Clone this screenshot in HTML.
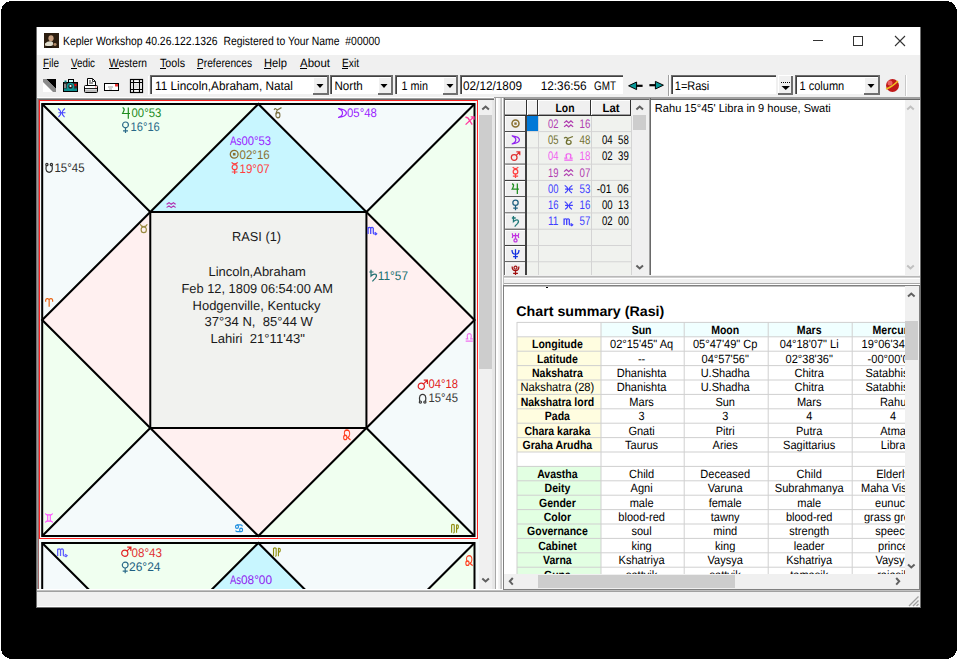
<!DOCTYPE html><html><head><meta charset="utf-8"><style>html,body{margin:0;padding:0;background:#fff;overflow:hidden}svg{display:block}text{font-family:"Liberation Sans", sans-serif}</style></head><body>
<svg width="957" height="660" viewBox="0 0 957 660" shape-rendering="crispEdges" text-rendering="geometricPrecision">
<rect x="1" y="1" width="956" height="658" rx="11" ry="11" fill="#000" shape-rendering="crispEdges"/>
<rect x="36" y="27" width="885" height="581" fill="#6e6e6e"/>
<rect x="37" y="27" width="883" height="580" fill="#f0f0f0"/>
<rect x="37" y="27" width="883" height="28" fill="#ffffff"/>
<g shape-rendering="geometricPrecision">
<rect x="44" y="33" width="15" height="15" fill="#2c1e10"/>
<ellipse cx="51" cy="38.2" rx="2.6" ry="3" fill="#c8a080"/>
<path d="M45 43.5 Q48 40.5 52 41.5 Q54 42.5 52.5 45.5 Q49 46.5 45 45.5Z" fill="#e0dccc"/>
<path d="M46 46 H52 V48 H46Z" fill="#1a120a"/>
<ellipse cx="55" cy="44.5" rx="1.6" ry="1.4" fill="#b08a68"/>
</g>
<text x="63" y="45" font-size="12" fill="#000" textLength="317" lengthAdjust="spacingAndGlyphs" xml:space="preserve">Kepler Workshop 40.26.122.1326  Registered to Your Name  #00000</text>
<rect x="813" y="40" width="10" height="1" fill="#333"/>
<rect x="853.5" y="36.5" width="9" height="9" fill="none" stroke="#333" stroke-width="1.2"/>
<path d="M895 36 L905 46 M905 36 L895 46" stroke="#333" stroke-width="1.1" shape-rendering="geometricPrecision"/>
<text x="43" y="67" font-size="12" fill="#000" textLength="16" lengthAdjust="spacingAndGlyphs" xml:space="preserve">File</text>
<rect x="43" y="68" width="6" height="1" fill="#000"/>
<text x="71" y="67" font-size="12" fill="#000" textLength="24" lengthAdjust="spacingAndGlyphs" xml:space="preserve">Vedic</text>
<rect x="71" y="68" width="6" height="1" fill="#000"/>
<text x="109" y="67" font-size="12" fill="#000" textLength="38" lengthAdjust="spacingAndGlyphs" xml:space="preserve">Western</text>
<rect x="109" y="68" width="10" height="1" fill="#000"/>
<text x="160" y="67" font-size="12" fill="#000" textLength="25" lengthAdjust="spacingAndGlyphs" xml:space="preserve">Tools</text>
<rect x="160" y="68" width="6" height="1" fill="#000"/>
<text x="197" y="67" font-size="12" fill="#000" textLength="55" lengthAdjust="spacingAndGlyphs" xml:space="preserve">Preferences</text>
<rect x="197" y="68" width="6" height="1" fill="#000"/>
<text x="264" y="67" font-size="12" fill="#000" textLength="23" lengthAdjust="spacingAndGlyphs" xml:space="preserve">Help</text>
<rect x="264" y="68" width="7" height="1" fill="#000"/>
<text x="300" y="67" font-size="12" fill="#000" textLength="30" lengthAdjust="spacingAndGlyphs" xml:space="preserve">About</text>
<rect x="300" y="68" width="7" height="1" fill="#000"/>
<text x="342" y="67" font-size="12" fill="#000" textLength="17" lengthAdjust="spacingAndGlyphs" xml:space="preserve">Exit</text>
<rect x="342" y="68" width="6" height="1" fill="#000"/>
<rect x="37" y="72" width="883" height="26" fill="#f0f0f0"/>
<rect x="37" y="97" width="883" height="1" fill="#a0a0a0"/>
<g shape-rendering="geometricPrecision">
<path d="M43 79 H56 V92 H43Z" fill="#fff"/>
<path d="M46 79 H56 V89Z" fill="#000"/>
<path d="M43 79 H46 L56 89 V92 H53 L43 82Z" fill="#8a8a8a"/>
<rect x="63.5" y="82.5" width="14" height="9" fill="#303030" stroke="#000" stroke-width="1"/>
<rect x="68.5" y="79.5" width="5" height="3" fill="#cff" stroke="#000" stroke-width="1"/>
<rect x="64" y="88.5" width="13" height="2.5" fill="#0a8a8a"/>
<rect x="64" y="84" width="2" height="4" fill="#888"/>
<circle cx="70.5" cy="86.5" r="3" fill="#202020" stroke="#0a9a9a" stroke-width="1.5"/>
<circle cx="70.5" cy="86" r="1.1" fill="#fff"/>
<rect x="74.5" y="84" width="2" height="2" fill="#e00"/>
<rect x="64.5" y="80.5" width="2" height="2" fill="#0a8a8a"/>
<path d="M87.5 78.5 H92.5 L95.5 81.5 V86.5 H87.5Z" fill="#fff" stroke="#000" stroke-width="1"/>
<path d="M89 81 H91 M89 83 H93 M92.5 78.5 V81.5 H95.5" fill="none" stroke="#333" stroke-width="1"/>
<rect x="84.5" y="85.5" width="13" height="7" rx="1" fill="#fff" stroke="#000" stroke-width="1"/>
<rect x="85" y="89.5" width="12" height="2.5" fill="#bbb"/>
<rect x="85" y="88" width="12" height="1" fill="#222"/>
<rect x="95" y="86.5" width="1.5" height="1" fill="#f66"/>
<rect x="104.5" y="83.5" width="14" height="7" fill="#fff" stroke="#000" stroke-width="1"/>
<rect x="115" y="84" width="3" height="2.5" fill="#e33"/>
<path d="M108 87 H113 M109 89 H112" stroke="#888" stroke-width="0.8"/>
<rect x="130.5" y="79.5" width="12" height="13" fill="#fff" stroke="#000" stroke-width="1.2"/>
<path d="M130.5 82.5 H142.5 M130.5 89.5 H142.5 M133.5 79.5 V92.5 M139.5 79.5 V92.5" stroke="#000" stroke-width="1.2" fill="none"/>
<rect x="134.5" y="83.5" width="4" height="5" fill="#ddd"/>
</g>
<rect x="148" y="76" width="1" height="19" fill="#fff"/>
<rect x="150" y="75" width="180" height="20" fill="#a0a0a0"/>
<rect x="151" y="76" width="179" height="19" fill="#fff"/>
<rect x="150" y="75" width="180" height="1" fill="#6e6e6e"/>
<rect x="150" y="75" width="1" height="20" fill="#6e6e6e"/>
<rect x="151" y="76" width="178" height="1" fill="#404040"/>
<rect x="151" y="76" width="1" height="18" fill="#404040"/>
<rect x="150" y="94" width="180" height="1" fill="#f0f0f0"/>
<rect x="329" y="75" width="1" height="20" fill="#f0f0f0"/>
<rect x="152" y="77" width="176" height="16" fill="#fff"/>
<text x="155" y="90" font-size="12.5" fill="#000" textLength="138" lengthAdjust="spacingAndGlyphs" xml:space="preserve">11 Lincoln,Abraham, Natal</text>
<rect x="313" y="77" width="16" height="18" fill="#f0f0f0"/>
<rect x="313" y="77" width="16" height="1" fill="#fff"/>
<rect x="313" y="77" width="1" height="17" fill="#fff"/>
<rect x="313" y="93" width="16" height="2" fill="#707070"/>
<rect x="327" y="76" width="2" height="19" fill="#707070"/>
<path d="M316.5 84 H323.5 L320 88Z" fill="#000" shape-rendering="geometricPrecision"/>
<rect x="330" y="75" width="64" height="20" fill="#a0a0a0"/>
<rect x="331" y="76" width="63" height="19" fill="#fff"/>
<rect x="330" y="75" width="64" height="1" fill="#6e6e6e"/>
<rect x="330" y="75" width="1" height="20" fill="#6e6e6e"/>
<rect x="331" y="76" width="62" height="1" fill="#404040"/>
<rect x="331" y="76" width="1" height="18" fill="#404040"/>
<rect x="330" y="94" width="64" height="1" fill="#f0f0f0"/>
<rect x="393" y="75" width="1" height="20" fill="#f0f0f0"/>
<rect x="332" y="77" width="60" height="16" fill="#fff"/>
<text x="334.5" y="90" font-size="12.5" fill="#000" textLength="28.3" lengthAdjust="spacingAndGlyphs" xml:space="preserve">North</text>
<rect x="377.5" y="77" width="15.5" height="18" fill="#f0f0f0"/>
<rect x="377.5" y="77" width="15.5" height="1" fill="#fff"/>
<rect x="377.5" y="77" width="1" height="17" fill="#fff"/>
<rect x="377.5" y="93" width="15.5" height="2" fill="#707070"/>
<rect x="391" y="76" width="2" height="19" fill="#707070"/>
<path d="M380.5 84 H387.5 L384.0 88Z" fill="#000" shape-rendering="geometricPrecision"/>
<rect x="395" y="75" width="64" height="20" fill="#a0a0a0"/>
<rect x="396" y="76" width="63" height="19" fill="#fff"/>
<rect x="395" y="75" width="64" height="1" fill="#6e6e6e"/>
<rect x="395" y="75" width="1" height="20" fill="#6e6e6e"/>
<rect x="396" y="76" width="62" height="1" fill="#404040"/>
<rect x="396" y="76" width="1" height="18" fill="#404040"/>
<rect x="395" y="94" width="64" height="1" fill="#f0f0f0"/>
<rect x="458" y="75" width="1" height="20" fill="#f0f0f0"/>
<rect x="397" y="77" width="60" height="16" fill="#fff"/>
<text x="401.6" y="90" font-size="12.5" fill="#000" textLength="26.3" lengthAdjust="spacingAndGlyphs" xml:space="preserve">1 min</text>
<rect x="443" y="77" width="15" height="18" fill="#f0f0f0"/>
<rect x="443" y="77" width="15" height="1" fill="#fff"/>
<rect x="443" y="77" width="1" height="17" fill="#fff"/>
<rect x="443" y="93" width="15" height="2" fill="#707070"/>
<rect x="456" y="76" width="2" height="19" fill="#707070"/>
<path d="M446.5 84 H453.5 L450 88Z" fill="#000" shape-rendering="geometricPrecision"/>
<rect x="460" y="75" width="164" height="20" fill="#a0a0a0"/>
<rect x="461" y="76" width="163" height="19" fill="#fff"/>
<rect x="460" y="75" width="164" height="1" fill="#6e6e6e"/>
<rect x="460" y="75" width="1" height="20" fill="#6e6e6e"/>
<rect x="461" y="76" width="162" height="1" fill="#404040"/>
<rect x="461" y="76" width="1" height="18" fill="#404040"/>
<rect x="460" y="94" width="164" height="1" fill="#f0f0f0"/>
<rect x="623" y="75" width="1" height="20" fill="#f0f0f0"/>
<rect x="462" y="77" width="160" height="16" fill="#fff"/>
<text x="463" y="90" font-size="12.5" fill="#000" textLength="59" lengthAdjust="spacingAndGlyphs" xml:space="preserve">02/12/1809</text>
<text x="540.7" y="90" font-size="12.5" fill="#000" textLength="46" lengthAdjust="spacingAndGlyphs" xml:space="preserve">12:36:56</text>
<text x="594.1" y="90" font-size="12.5" fill="#000" textLength="22" lengthAdjust="spacingAndGlyphs" xml:space="preserve">GMT</text>
<path d="M636 85.8 H642.6" stroke="#000" stroke-width="2.2" shape-rendering="geometricPrecision"/>
<path d="M628.6 85.8 L636.6 82 V89.6Z" fill="#089898" stroke="#000" stroke-width="1" stroke-linejoin="round" shape-rendering="geometricPrecision"/>
<path d="M649.4 85.2 H656" stroke="#000" stroke-width="2.2" shape-rendering="geometricPrecision"/>
<path d="M663.4 85.2 L655.4 81.4 V89Z" fill="#089898" stroke="#000" stroke-width="1" stroke-linejoin="round" shape-rendering="geometricPrecision"/>
<rect x="668" y="75" width="1" height="21" fill="#a0a0a0"/>
<rect x="669" y="75" width="1" height="21" fill="#ffffff"/>
<rect x="671" y="75" width="106" height="20" fill="#a0a0a0"/>
<rect x="672" y="76" width="105" height="19" fill="#fff"/>
<rect x="671" y="75" width="106" height="1" fill="#6e6e6e"/>
<rect x="671" y="75" width="1" height="20" fill="#6e6e6e"/>
<rect x="672" y="76" width="104" height="1" fill="#404040"/>
<rect x="672" y="76" width="1" height="18" fill="#404040"/>
<rect x="671" y="94" width="106" height="1" fill="#f0f0f0"/>
<rect x="776" y="75" width="1" height="20" fill="#f0f0f0"/>
<rect x="673" y="77" width="102" height="16" fill="#fff"/>
<text x="674.8" y="90" font-size="12.5" fill="#000" textLength="34.5" lengthAdjust="spacingAndGlyphs" xml:space="preserve">1=Rasi</text>
<rect x="778" y="75" width="15" height="20" fill="#f0f0f0"/>
<rect x="778" y="75" width="15" height="1" fill="#ffffff"/>
<rect x="778" y="75" width="1" height="20" fill="#ffffff"/>
<rect x="778" y="93" width="15" height="2" fill="#6e6e6e"/>
<rect x="791" y="76" width="2" height="19" fill="#6e6e6e"/>
<rect x="781" y="82" width="1.2" height="1.4" fill="#000"/>
<rect x="783" y="82" width="1.2" height="1.4" fill="#000"/>
<rect x="785" y="82" width="1.2" height="1.4" fill="#000"/>
<rect x="787" y="82" width="1.2" height="1.4" fill="#000"/>
<rect x="789" y="82" width="1.2" height="1.4" fill="#000"/>
<path d="M781.5 86 H790 L785.75 90Z" fill="#000" shape-rendering="geometricPrecision"/>
<rect x="795" y="75" width="86" height="20" fill="#a0a0a0"/>
<rect x="796" y="76" width="85" height="19" fill="#fff"/>
<rect x="795" y="75" width="86" height="1" fill="#6e6e6e"/>
<rect x="795" y="75" width="1" height="20" fill="#6e6e6e"/>
<rect x="796" y="76" width="84" height="1" fill="#404040"/>
<rect x="796" y="76" width="1" height="18" fill="#404040"/>
<rect x="795" y="94" width="86" height="1" fill="#f0f0f0"/>
<rect x="880" y="75" width="1" height="20" fill="#f0f0f0"/>
<rect x="797" y="77" width="82" height="16" fill="#fff"/>
<text x="799.5" y="90" font-size="12.5" fill="#000" textLength="44.7" lengthAdjust="spacingAndGlyphs" xml:space="preserve">1 column</text>
<rect x="864" y="77" width="16" height="18" fill="#f0f0f0"/>
<rect x="864" y="77" width="16" height="1" fill="#fff"/>
<rect x="864" y="77" width="1" height="17" fill="#fff"/>
<rect x="864" y="93" width="16" height="2" fill="#707070"/>
<rect x="878" y="76" width="2" height="19" fill="#707070"/>
<path d="M867.5 84 H874.5 L871 88Z" fill="#000" shape-rendering="geometricPrecision"/>
<g shape-rendering="geometricPrecision"><circle cx="892.5" cy="85.5" r="6.5" fill="#c01818"/><circle cx="890" cy="83" r="2.5" fill="#ff8080" opacity="0.7"/><path d="M886 89 Q892 87 898 81" stroke="#f0c020" stroke-width="1.6" fill="none"/></g>
<rect x="905" y="75" width="1" height="21" fill="#c8c8c8"/>
<rect x="906" y="75" width="1" height="21" fill="#fff"/>
<rect x="37" y="98" width="457" height="491" fill="#f0f0f0"/>
<rect x="37" y="97" width="457" height="1" fill="#ffffff"/>
<rect x="37" y="98" width="457" height="1" fill="#a0a0a0"/>
<rect x="38" y="99" width="456" height="1" fill="#696969"/>
<rect x="37" y="98" width="1" height="491" fill="#949c9c"/>
<rect x="38" y="99" width="1" height="490" fill="#a06868"/>
<defs><clipPath id="cp"><rect x="39" y="100" width="440" height="489"/></clipPath></defs>
<g clip-path="url(#cp)">
<rect x="39" y="100" width="440" height="489" fill="#f4fafa"/>
<g shape-rendering="geometricPrecision">
<path d="M150.275,212 L258.35,104 L366.425,212Z" fill="#c8f6ff"/>
<path d="M42.2,104 L258.35,104 L150.275,212Z" fill="#f0fff0"/>
<path d="M42.2,104 L150.275,212 L42.2,320Z" fill="#f4fafb"/>
<path d="M150.275,212 L42.2,320 L150.275,428Z" fill="#fff0f0"/>
<path d="M42.2,320 L150.275,428 L42.2,536Z" fill="#f0fff0"/>
<path d="M42.2,536 L150.275,428 L258.35,536Z" fill="#f4fafb"/>
<path d="M150.275,428 L258.35,536 L366.425,428Z" fill="#fff0f0"/>
<path d="M258.35,536 L366.425,428 L474.5,536Z" fill="#f0fff0"/>
<path d="M474.5,536 L366.425,428 L474.5,320Z" fill="#f4fafb"/>
<path d="M366.425,212 L474.5,320 L366.425,428Z" fill="#fff0f0"/>
<path d="M474.5,320 L366.425,212 L474.5,104Z" fill="#f0fff0"/>
<path d="M474.5,104 L366.425,212 L258.35,104Z" fill="#f4fafb"/>
<rect x="150.275" y="212" width="216.15" height="216" fill="#f1f2ef"/>
<path d="M42.2,104 L150.275,212 M474.5,104 L366.425,212 M42.2,536 L150.275,428 M474.5,536 L366.425,428 M258.35,104 L42.2,320 L258.35,536 L474.5,320 Z" fill="none" stroke="#000" stroke-width="2.1"/>
<rect x="150.275" y="212" width="216.15" height="216" fill="#f1f2ef" stroke="#000" stroke-width="2"/>
<rect x="42.2" y="104" width="432.3" height="432" fill="none" stroke="#000" stroke-width="2"/>
</g>
<rect x="39.5" y="100.5" width="438" height="438" fill="none" stroke="#ff2020" stroke-width="1"/>
<g shape-rendering="geometricPrecision">
<path d="M150.275,651 L258.35,543 L366.425,651Z" fill="#c8f6ff"/>
<path d="M42.2,543 L258.35,543 L150.275,651Z" fill="#f0fff0"/>
<path d="M42.2,543 L150.275,651 L42.2,759Z" fill="#f4fafb"/>
<path d="M150.275,651 L42.2,759 L150.275,867Z" fill="#fff0f0"/>
<path d="M42.2,759 L150.275,867 L42.2,975Z" fill="#f0fff0"/>
<path d="M42.2,975 L150.275,867 L258.35,975Z" fill="#f4fafb"/>
<path d="M150.275,867 L258.35,975 L366.425,867Z" fill="#fff0f0"/>
<path d="M258.35,975 L366.425,867 L474.5,975Z" fill="#f0fff0"/>
<path d="M474.5,975 L366.425,867 L474.5,759Z" fill="#f4fafb"/>
<path d="M366.425,651 L474.5,759 L366.425,867Z" fill="#fff0f0"/>
<path d="M474.5,759 L366.425,651 L474.5,543Z" fill="#f0fff0"/>
<path d="M474.5,543 L366.425,651 L258.35,543Z" fill="#f4fafb"/>
<rect x="150.275" y="651" width="216.15" height="216" fill="#f1f2ef"/>
<path d="M42.2,543 L150.275,651 M474.5,543 L366.425,651 M42.2,975 L150.275,867 M474.5,975 L366.425,867 M258.35,543 L42.2,759 L258.35,975 L474.5,759 Z" fill="none" stroke="#000" stroke-width="2.1"/>
<rect x="150.275" y="651" width="216.15" height="216" fill="#f1f2ef" stroke="#000" stroke-width="2"/>
<rect x="42.2" y="543" width="432.3" height="432" fill="none" stroke="#000" stroke-width="2"/>
</g>
<g transform="translate(57 108) scale(0.900 0.950)" shape-rendering="geometricPrecision"><path d="M1.2 0.6 Q7.4 5 1.6 9.6 M8.8 0.6 Q2.6 5 8.4 9.6 M1.6 5 H9.4" fill="none" stroke="#4848ff" stroke-width="1.30"/></g>
<g transform="translate(122.3 107.2) scale(1.000 1.000)" shape-rendering="geometricPrecision"><path d="M0.3 0.3 Q2.6 1.3 1.6 3.6 Q0.8 5.4 0.3 6.3 H7.7 M6 0.2 V11.5" fill="none" stroke="#1e8c1e" stroke-width="1.20"/></g>
<text x="131.5" y="116.6" font-size="12.5" fill="#1e8c1e" textLength="29.8" lengthAdjust="spacingAndGlyphs" xml:space="preserve">00°53</text>
<g transform="translate(122 121.6) scale(1.000 1.000)" shape-rendering="geometricPrecision"><circle cx="3.5" cy="3.3" r="2.9" fill="none" stroke="#2a6a88" stroke-width="1.20"/><path d="M3.5 6.2 V11.5 M1 9.3 H6" stroke="#2a6a88" stroke-width="1.20"/></g>
<text x="130.5" y="131.2" font-size="12.5" fill="#2a6a88" textLength="29.3" lengthAdjust="spacingAndGlyphs" xml:space="preserve">16°16</text>
<g transform="translate(45 163) scale(1.000 1.000)" shape-rendering="geometricPrecision"><path d="M1.2 2.6 Q0.6 6 1.6 8 Q4.15 10.6 6.7 8 Q7.7 6 7.1 2.6" fill="none" stroke="#303030" stroke-width="1.20"/><circle cx="1.9" cy="1.5" r="1.1" fill="none" stroke="#303030" stroke-width="1.20"/><circle cx="6.4" cy="1.5" r="1.1" fill="none" stroke="#303030" stroke-width="1.20"/></g>
<text x="54.5" y="172" font-size="12.5" fill="#303030" textLength="30.0" lengthAdjust="spacingAndGlyphs" xml:space="preserve">15°45</text>
<text x="230" y="144.7" font-size="12.5" fill="#9a22ff" textLength="11.5" lengthAdjust="spacingAndGlyphs" xml:space="preserve">As</text>
<text x="241.5" y="144.7" font-size="12.5" fill="#9a22ff" textLength="29.5" lengthAdjust="spacingAndGlyphs" xml:space="preserve">00°53</text>
<g transform="translate(229.4 149.4) scale(1.000 1.000)" shape-rendering="geometricPrecision"><circle cx="4.8" cy="4.8" r="3.9" fill="none" stroke="#8a7030" stroke-width="1.30"/><rect x="3.5" y="3.5" width="2.6" height="2.6" fill="#8a7030"/></g>
<text x="239.5" y="159" font-size="12.5" fill="#8a7030" textLength="30.3" lengthAdjust="spacingAndGlyphs" xml:space="preserve">02°16</text>
<g transform="translate(231 162) scale(1.000 1.000)" shape-rendering="geometricPrecision"><path d="M0.6 0.3 Q3.65 3.6 6.7 0.3" fill="none" stroke="#ff4040" stroke-width="1.20"/><circle cx="3.65" cy="5.2" r="2.5" fill="none" stroke="#ff4040" stroke-width="1.20"/><path d="M3.65 7.7 V12 M0.8 10 H6.5" stroke="#ff4040" stroke-width="1.20"/></g>
<text x="239.5" y="173" font-size="12.5" fill="#ff4040" textLength="30.3" lengthAdjust="spacingAndGlyphs" xml:space="preserve">19°07</text>
<g transform="translate(273.5 107) scale(0.850 1.100)" shape-rendering="geometricPrecision"><path d="M0.6 2.6 Q2.4 0.4 3.8 2.6 M9.4 0.6 Q6.6 2 4.6 2.6 Q3 4.6 3 6.6" fill="none" stroke="#7a7040" stroke-width="1.23"/><circle cx="5.2" cy="7.4" r="2.4" fill="none" stroke="#7a7040" stroke-width="1.23"/></g>
<g transform="translate(338 108) scale(1.000 1.000)" shape-rendering="geometricPrecision"><path d="M0.6 0.6 C11 1.8 11 8.2 0.6 9.4 C5.8 7.6 5.8 2.4 0.6 0.6Z" fill="none" stroke="#9a22ff" stroke-width="1.20" stroke-linejoin="round"/></g>
<text x="347" y="116.9" font-size="12.5" fill="#9a22ff" textLength="29.8" lengthAdjust="spacingAndGlyphs" xml:space="preserve">05°48</text>
<g transform="translate(465 116) scale(0.950 0.900)" shape-rendering="geometricPrecision"><path d="M0.6 9.6 L9.4 0.8 M6 0.9 H9.4 V4.2 M0.4 1.4 Q3.2 1.2 4.6 4.6 L7.6 9.6" fill="none" stroke="#ff40a0" stroke-width="1.41"/></g>
<g transform="translate(166 202) scale(1.000 0.650)" shape-rendering="geometricPrecision"><path d="M0.6 3.6 L3 1.2 L5.2 3.6 L7.4 1.2 L9.6 3.6 M0.6 8.4 L3 6 L5.2 8.4 L7.4 6 L9.6 8.4" fill="none" stroke="#b030b0" stroke-width="1.45"/></g>
<g transform="translate(139.5 223.5) scale(0.850 0.950)" shape-rendering="geometricPrecision"><circle cx="5" cy="6.6" r="3.1" fill="none" stroke="#9a8a40" stroke-width="1.33"/><path d="M0.8 0.8 Q2 3.4 5 3.4 Q8 3.4 9.2 0.8" fill="none" stroke="#9a8a40" stroke-width="1.33"/></g>
<g transform="translate(367.5 226) scale(1.000 0.900)" shape-rendering="geometricPrecision"><path d="M0.6 1.2 V9 M0.6 2.6 Q2 0.4 3.2 2.6 V9 M3.2 2.6 Q4.6 0.4 5.8 2.6 V8 Q6 9.2 8 8.8 M7.2 7 L9.2 8.6 L7.8 10.2" fill="none" stroke="#4848ff" stroke-width="1.26"/></g>
<g transform="translate(369 269.5) scale(1.000 1.000)" shape-rendering="geometricPrecision"><path d="M0.3 2.5 H4.5 M2 0.2 V6.5 Q4.5 4 6.8 4.8 Q8.4 6.2 6.4 8.6 Q4.6 10.4 3.4 11.8" fill="none" stroke="#207070" stroke-width="1.20"/></g>
<text x="377.8" y="279.5" font-size="12.5" fill="#207070" textLength="30.2" lengthAdjust="spacingAndGlyphs" xml:space="preserve">11°57</text>
<g transform="translate(45 297.9) scale(0.830 0.890)" shape-rendering="geometricPrecision"><path d="M0.8 4.4 V2.6 Q1.2 0.6 3 0.8 Q4.4 1 5 2 Q5.6 1 7 0.8 Q8.8 0.6 9.2 2.6 V4.4 M5 2 V10" fill="none" stroke="#e86010" stroke-width="1.40"/></g>
<g transform="translate(465 332) scale(0.850 1.000)" shape-rendering="geometricPrecision"><path d="M0.8 9.2 H9.2 M0.8 6.8 H3.2 Q1.4 1.6 5 1.6 Q8.6 1.6 6.8 6.8 H9.2" fill="none" stroke="#f070f0" stroke-width="1.30"/></g>
<g transform="translate(417.5 379.5) scale(1.000 1.000)" shape-rendering="geometricPrecision"><circle cx="3.8" cy="6.7" r="3.1" fill="none" stroke="#e02020" stroke-width="1.20"/><path d="M6 4.4 L9.9 0.6 M6.2 0.6 H9.9 V4.4" fill="none" stroke="#e02020" stroke-width="1.20"/></g>
<text x="428.5" y="387.8" font-size="12.5" fill="#e02020" textLength="29.5" lengthAdjust="spacingAndGlyphs" xml:space="preserve">04°18</text>
<g transform="translate(418.5 393.6) scale(1.000 1.000)" shape-rendering="geometricPrecision"><path d="M1.2 7.4 Q0.6 4 1.6 2 Q4.15 -0.6 6.7 2 Q7.7 4 7.1 7.4" fill="none" stroke="#383838" stroke-width="1.20"/><circle cx="1.9" cy="8.5" r="1.1" fill="none" stroke="#383838" stroke-width="1.20"/><circle cx="6.4" cy="8.5" r="1.1" fill="none" stroke="#383838" stroke-width="1.20"/></g>
<text x="428.5" y="402.4" font-size="12.5" fill="#383838" textLength="29.5" lengthAdjust="spacingAndGlyphs" xml:space="preserve">15°45</text>
<g transform="translate(342.8 429.3) scale(0.820 1.100)" shape-rendering="geometricPrecision"><path d="M2.4 5.6 Q0.6 1 4.8 0.6 Q8.6 0.6 8.4 4.4 Q8 6.8 6 7.6 L9.4 9.6" fill="none" stroke="#ff4020" stroke-width="1.25"/><circle cx="3" cy="7.4" r="2" fill="none" stroke="#ff4020" stroke-width="1.25"/></g>
<g transform="translate(45 513) scale(0.800 1.000)" shape-rendering="geometricPrecision"><path d="M0.6 0.4 Q1 1.6 2.4 1.8 H7.6 Q9 1.6 9.4 0.4 M0.6 9.6 Q1 8.4 2.4 8.2 H7.6 Q9 8.4 9.4 9.6 M3.4 1.8 V8.2 M6.6 1.8 V8.2" fill="none" stroke="#ff50ff" stroke-width="1.33"/></g>
<g transform="translate(235.1 523.9) scale(0.790 0.890)" shape-rendering="geometricPrecision"><path d="M2.2 1.2 H7 Q9 1.2 9.2 2.8 M7.8 8.8 H3 Q1 8.8 0.8 7.2" fill="none" stroke="#2090e0" stroke-width="1.43"/><circle cx="2.4" cy="3.2" r="1.9" fill="none" stroke="#2090e0" stroke-width="1.43"/><circle cx="7.6" cy="6.8" r="1.9" fill="none" stroke="#2090e0" stroke-width="1.43"/></g>
<g transform="translate(450.8 523.9) scale(0.820 0.920)" shape-rendering="geometricPrecision"><path d="M1 9.6 V1.2 Q2.6 0 4.2 1.2 V9 Q4 9.8 3 9.6 M7 9.6 V1.2 Q9.6 0.6 9.2 3.4 Q9 5.6 7 5.2" fill="none" stroke="#909010" stroke-width="1.38"/></g>
<text x="256.5" y="240.7" font-size="13" fill="#1a1a1a" text-anchor="middle" textLength="49" lengthAdjust="spacingAndGlyphs" xml:space="preserve">RASI (1)</text>
<text x="257.2" y="275.5" font-size="13" fill="#1a1a1a" text-anchor="middle" textLength="97.5" lengthAdjust="spacingAndGlyphs" xml:space="preserve">Lincoln,Abraham</text>
<text x="257.2" y="292.5" font-size="13" fill="#1a1a1a" text-anchor="middle" textLength="151.5" lengthAdjust="spacingAndGlyphs" xml:space="preserve">Feb 12, 1809 06:54:00 AM</text>
<text x="256.6" y="309.6" font-size="13" fill="#1a1a1a" text-anchor="middle" textLength="128" lengthAdjust="spacingAndGlyphs" xml:space="preserve">Hodgenville, Kentucky</text>
<text x="258.7" y="326.3" font-size="13" fill="#1a1a1a" text-anchor="middle" textLength="108.3" lengthAdjust="spacingAndGlyphs" xml:space="preserve">37°34 N,  85°44 W</text>
<text x="257.7" y="343" font-size="13" fill="#1a1a1a" text-anchor="middle" textLength="94.5" lengthAdjust="spacingAndGlyphs" xml:space="preserve">Lahiri  21°11'43"</text>
<g transform="translate(57 547.5) scale(1.100 0.950)" shape-rendering="geometricPrecision"><path d="M0.6 1.2 V9 M0.6 2.6 Q2 0.4 3.2 2.6 V9 M3.2 2.6 Q4.6 0.4 5.8 2.6 V8 Q6 9.2 8 8.8 M7.2 7 L9.2 8.6 L7.8 10.2" fill="none" stroke="#6060ff" stroke-width="1.17"/></g>
<g transform="translate(121 546.5) scale(1.000 1.000)" shape-rendering="geometricPrecision"><circle cx="3.8" cy="6.7" r="3.1" fill="none" stroke="#e02020" stroke-width="1.20"/><path d="M6 4.4 L9.9 0.6 M6.2 0.6 H9.9 V4.4" fill="none" stroke="#e02020" stroke-width="1.20"/></g>
<text x="131.5" y="556.8" font-size="12.5" fill="#e03030" textLength="30.5" lengthAdjust="spacingAndGlyphs" xml:space="preserve">08°43</text>
<g transform="translate(121.7 561.8) scale(1.000 1.000)" shape-rendering="geometricPrecision"><circle cx="3.5" cy="3.3" r="2.9" fill="none" stroke="#2a6a88" stroke-width="1.20"/><path d="M3.5 6.2 V11.5 M1 9.3 H6" stroke="#2a6a88" stroke-width="1.20"/></g>
<text x="129" y="570.5" font-size="12.5" fill="#206080" textLength="31.5" lengthAdjust="spacingAndGlyphs" xml:space="preserve">26°24</text>
<text x="230" y="584" font-size="12.5" fill="#9020f0" textLength="11" lengthAdjust="spacingAndGlyphs" xml:space="preserve">As</text>
<text x="241" y="584" font-size="12.5" fill="#9020f0" textLength="31" lengthAdjust="spacingAndGlyphs" xml:space="preserve">08°00</text>
<g transform="translate(272.7 547.3) scale(0.820 0.920)" shape-rendering="geometricPrecision"><path d="M1 9.6 V1.2 Q2.6 0 4.2 1.2 V9 Q4 9.8 3 9.6 M7 9.6 V1.2 Q9.6 0.6 9.2 3.4 Q9 5.6 7 5.2" fill="none" stroke="#909010" stroke-width="1.38"/></g>
<g transform="translate(465 555) scale(0.820 1.100)" shape-rendering="geometricPrecision"><path d="M2.4 5.6 Q0.6 1 4.8 0.6 Q8.6 0.6 8.4 4.4 Q8 6.8 6 7.6 L9.4 9.6" fill="none" stroke="#ff4020" stroke-width="1.25"/><circle cx="3" cy="7.4" r="2" fill="none" stroke="#ff4020" stroke-width="1.25"/></g>
</g>
<rect x="479" y="100" width="15" height="489" fill="#f0f0f0"/>
<rect x="479" y="115" width="13" height="254" fill="#cdcdcd"/>
<path d="M482.3 109.5 L485.6 106.5 L488.90000000000003 109.5" fill="none" stroke="#606060" stroke-width="2" shape-rendering="geometricPrecision"/>
<path d="M482.3 578.5 L485.6 581.5 L488.90000000000003 578.5" fill="none" stroke="#606060" stroke-width="2" shape-rendering="geometricPrecision"/>
<rect x="494" y="98" width="10" height="491" fill="#f0f0f0"/>
<rect x="492" y="100" width="1" height="489" fill="#e8e8e8"/>
<rect x="493" y="100" width="1" height="489" fill="#e6e6e6"/>
<rect x="494" y="98" width="1" height="491" fill="#e6e6e6"/>
<rect x="495" y="98" width="1" height="491" fill="#a8a8a8"/>
<rect x="496" y="98" width="1" height="491" fill="#ffffff"/>
<rect x="497" y="98" width="1" height="491" fill="#ffffff"/>
<rect x="498" y="98" width="1" height="491" fill="#f4f4f4"/>
<rect x="499" y="98" width="1" height="491" fill="#f2f2f2"/>
<rect x="500" y="98" width="1" height="491" fill="#d0d0d0"/>
<rect x="501" y="98" width="1" height="491" fill="#c0c0c0"/>
<rect x="502" y="98" width="1" height="491" fill="#ffffff"/>
<rect x="503" y="98" width="1" height="187" fill="#c0c0c0"/>
<rect x="503" y="285" width="1" height="304" fill="#888888"/>
<rect x="504" y="98" width="145" height="177" fill="#f0f0f0"/>
<rect x="504" y="98" width="145" height="1" fill="#a0a0a0"/>
<rect x="504" y="99" width="145" height="1" fill="#696969"/>
<rect x="504" y="98" width="1" height="177" fill="#696969"/>
<defs><clipPath id="gcp"><rect x="505" y="100" width="127" height="175"/></clipPath></defs>
<g clip-path="url(#gcp)">
<rect x="527" y="116" width="105" height="160" fill="#f0f2ee"/>
<rect x="505" y="100" width="127" height="16" fill="#f0f0f0"/>
<rect x="527" y="131.10" width="105" height="1.00" fill="#d4d4d4" shape-rendering="geometricPrecision"/>
<rect x="527" y="147.37" width="105" height="1.00" fill="#d4d4d4" shape-rendering="geometricPrecision"/>
<rect x="527" y="163.64" width="105" height="1.00" fill="#d4d4d4" shape-rendering="geometricPrecision"/>
<rect x="527" y="179.91" width="105" height="1.00" fill="#d4d4d4" shape-rendering="geometricPrecision"/>
<rect x="527" y="196.18" width="105" height="1.00" fill="#d4d4d4" shape-rendering="geometricPrecision"/>
<rect x="527" y="212.45" width="105" height="1.00" fill="#d4d4d4" shape-rendering="geometricPrecision"/>
<rect x="527" y="228.72" width="105" height="1.00" fill="#d4d4d4" shape-rendering="geometricPrecision"/>
<rect x="527" y="244.99" width="105" height="1.00" fill="#d4d4d4" shape-rendering="geometricPrecision"/>
<rect x="527" y="261.26" width="105" height="1.00" fill="#d4d4d4" shape-rendering="geometricPrecision"/>
<rect x="527" y="277.53" width="105" height="1.00" fill="#d4d4d4" shape-rendering="geometricPrecision"/>
<rect x="538" y="116" width="1" height="159" fill="#d4d4d4"/>
<rect x="591" y="116" width="1" height="159" fill="#d4d4d4"/>
<rect x="631" y="116" width="1" height="159" fill="#d4d4d4"/>
<rect x="505" y="100" width="22" height="1" fill="#ffffff"/>
<rect x="505" y="100" width="1" height="15" fill="#ffffff"/>
<rect x="505" y="114" width="22" height="1" fill="#a0a0a0"/>
<rect x="505" y="115" width="22" height="1" fill="#303030"/>
<rect x="526" y="100" width="1" height="16" fill="#303030"/>
<rect x="527" y="100" width="11" height="1" fill="#ffffff"/>
<rect x="527" y="100" width="1" height="15" fill="#ffffff"/>
<rect x="527" y="114" width="11" height="1" fill="#a0a0a0"/>
<rect x="527" y="115" width="11" height="1" fill="#303030"/>
<rect x="537" y="100" width="1" height="16" fill="#303030"/>
<rect x="527" y="100" width="1" height="15" fill="#ffffff"/>
<rect x="538" y="100" width="53" height="1" fill="#ffffff"/>
<rect x="538" y="100" width="1" height="15" fill="#ffffff"/>
<rect x="538" y="114" width="53" height="1" fill="#a0a0a0"/>
<rect x="538" y="115" width="53" height="1" fill="#303030"/>
<rect x="590" y="100" width="1" height="16" fill="#303030"/>
<rect x="538" y="100" width="1" height="15" fill="#ffffff"/>
<rect x="591" y="100" width="40" height="1" fill="#ffffff"/>
<rect x="591" y="100" width="1" height="15" fill="#ffffff"/>
<rect x="591" y="114" width="40" height="1" fill="#a0a0a0"/>
<rect x="591" y="115" width="40" height="1" fill="#303030"/>
<rect x="630" y="100" width="1" height="16" fill="#303030"/>
<rect x="591" y="100" width="1" height="15" fill="#ffffff"/>
<text x="565" y="112" font-size="12" fill="#000" font-weight="bold" text-anchor="middle" textLength="19" lengthAdjust="spacingAndGlyphs" xml:space="preserve">Lon</text>
<text x="611" y="112" font-size="12" fill="#000" font-weight="bold" text-anchor="middle" textLength="17.1" lengthAdjust="spacingAndGlyphs" xml:space="preserve">Lat</text>
<rect x="505" y="116.00" width="22" height="16.27" fill="#f0f0f0" shape-rendering="geometricPrecision"/>
<rect x="505" y="116.00" width="22" height="1.00" fill="#ffffff" shape-rendering="geometricPrecision"/>
<rect x="505" y="116.00" width="1" height="15.27" fill="#ffffff" shape-rendering="geometricPrecision"/>
<rect x="505" y="131.07" width="22" height="1.20" fill="#404040" shape-rendering="geometricPrecision"/>
<rect x="505" y="132.27" width="22" height="16.27" fill="#f0f0f0" shape-rendering="geometricPrecision"/>
<rect x="505" y="132.27" width="22" height="1.00" fill="#ffffff" shape-rendering="geometricPrecision"/>
<rect x="505" y="132.27" width="1" height="15.27" fill="#ffffff" shape-rendering="geometricPrecision"/>
<rect x="505" y="147.34" width="22" height="1.20" fill="#404040" shape-rendering="geometricPrecision"/>
<rect x="505" y="148.54" width="22" height="16.27" fill="#f0f0f0" shape-rendering="geometricPrecision"/>
<rect x="505" y="148.54" width="22" height="1.00" fill="#ffffff" shape-rendering="geometricPrecision"/>
<rect x="505" y="148.54" width="1" height="15.27" fill="#ffffff" shape-rendering="geometricPrecision"/>
<rect x="505" y="163.61" width="22" height="1.20" fill="#404040" shape-rendering="geometricPrecision"/>
<rect x="505" y="164.81" width="22" height="16.27" fill="#f0f0f0" shape-rendering="geometricPrecision"/>
<rect x="505" y="164.81" width="22" height="1.00" fill="#ffffff" shape-rendering="geometricPrecision"/>
<rect x="505" y="164.81" width="1" height="15.27" fill="#ffffff" shape-rendering="geometricPrecision"/>
<rect x="505" y="179.88" width="22" height="1.20" fill="#404040" shape-rendering="geometricPrecision"/>
<rect x="505" y="181.08" width="22" height="16.27" fill="#f0f0f0" shape-rendering="geometricPrecision"/>
<rect x="505" y="181.08" width="22" height="1.00" fill="#ffffff" shape-rendering="geometricPrecision"/>
<rect x="505" y="181.08" width="1" height="15.27" fill="#ffffff" shape-rendering="geometricPrecision"/>
<rect x="505" y="196.15" width="22" height="1.20" fill="#404040" shape-rendering="geometricPrecision"/>
<rect x="505" y="197.35" width="22" height="16.27" fill="#f0f0f0" shape-rendering="geometricPrecision"/>
<rect x="505" y="197.35" width="22" height="1.00" fill="#ffffff" shape-rendering="geometricPrecision"/>
<rect x="505" y="197.35" width="1" height="15.27" fill="#ffffff" shape-rendering="geometricPrecision"/>
<rect x="505" y="212.42" width="22" height="1.20" fill="#404040" shape-rendering="geometricPrecision"/>
<rect x="505" y="213.62" width="22" height="16.27" fill="#f0f0f0" shape-rendering="geometricPrecision"/>
<rect x="505" y="213.62" width="22" height="1.00" fill="#ffffff" shape-rendering="geometricPrecision"/>
<rect x="505" y="213.62" width="1" height="15.27" fill="#ffffff" shape-rendering="geometricPrecision"/>
<rect x="505" y="228.69" width="22" height="1.20" fill="#404040" shape-rendering="geometricPrecision"/>
<rect x="505" y="229.89" width="22" height="16.27" fill="#f0f0f0" shape-rendering="geometricPrecision"/>
<rect x="505" y="229.89" width="22" height="1.00" fill="#ffffff" shape-rendering="geometricPrecision"/>
<rect x="505" y="229.89" width="1" height="15.27" fill="#ffffff" shape-rendering="geometricPrecision"/>
<rect x="505" y="244.96" width="22" height="1.20" fill="#404040" shape-rendering="geometricPrecision"/>
<rect x="505" y="246.16" width="22" height="16.27" fill="#f0f0f0" shape-rendering="geometricPrecision"/>
<rect x="505" y="246.16" width="22" height="1.00" fill="#ffffff" shape-rendering="geometricPrecision"/>
<rect x="505" y="246.16" width="1" height="15.27" fill="#ffffff" shape-rendering="geometricPrecision"/>
<rect x="505" y="261.23" width="22" height="1.20" fill="#404040" shape-rendering="geometricPrecision"/>
<rect x="505" y="262.43" width="22" height="16.27" fill="#f0f0f0" shape-rendering="geometricPrecision"/>
<rect x="505" y="262.43" width="22" height="1.00" fill="#ffffff" shape-rendering="geometricPrecision"/>
<rect x="505" y="262.43" width="1" height="15.27" fill="#ffffff" shape-rendering="geometricPrecision"/>
<rect x="505" y="277.50" width="22" height="1.20" fill="#404040" shape-rendering="geometricPrecision"/>
<rect x="525" y="116" width="1" height="159" fill="#404040"/>
<rect x="526" y="116" width="1" height="159" fill="#404040"/>
<rect x="527" y="116" width="11" height="15" fill="#0078d7"/>
<g transform="translate(511.18 119.28) scale(0.900 0.900)" shape-rendering="geometricPrecision"><circle cx="4.8" cy="4.8" r="3.9" fill="none" stroke="#8a7030" stroke-width="1.67"/><rect x="3.5" y="3.5" width="2.6" height="2.6" fill="#8a7030"/></g>
<g transform="translate(511.68 135.27) scale(0.920 0.920)" shape-rendering="geometricPrecision"><path d="M0.6 0.6 C11 1.8 11 8.2 0.6 9.4 C5.8 7.6 5.8 2.4 0.6 0.6Z" fill="none" stroke="#9020f0" stroke-width="1.36" stroke-linejoin="round"/></g>
<g transform="translate(510.67 151.31) scale(0.920 0.920)" shape-rendering="geometricPrecision"><circle cx="3.8" cy="6.7" r="3.1" fill="none" stroke="#e03030" stroke-width="1.36"/><path d="M6 4.4 L9.9 0.6 M6.2 0.6 H9.9 V4.4" fill="none" stroke="#e03030" stroke-width="1.36"/></g>
<g transform="translate(512.14 166.89) scale(0.920 0.920)" shape-rendering="geometricPrecision"><path d="M0.6 0.3 Q3.65 3.6 6.7 0.3" fill="none" stroke="#ff4040" stroke-width="1.36"/><circle cx="3.65" cy="5.2" r="2.5" fill="none" stroke="#ff4040" stroke-width="1.36"/><path d="M3.65 7.7 V12 M0.8 10 H6.5" stroke="#ff4040" stroke-width="1.36"/></g>
<g transform="translate(511.82 183.39) scale(0.920 0.920)" shape-rendering="geometricPrecision"><path d="M0.3 0.3 Q2.6 1.3 1.6 3.6 Q0.8 5.4 0.3 6.3 H7.7 M6 0.2 V11.5" fill="none" stroke="#209020" stroke-width="1.36"/></g>
<g transform="translate(512.28 199.66) scale(0.920 0.920)" shape-rendering="geometricPrecision"><circle cx="3.5" cy="3.3" r="2.9" fill="none" stroke="#206080" stroke-width="1.36"/><path d="M3.5 6.2 V11.5 M1 9.3 H6" stroke="#206080" stroke-width="1.36"/></g>
<g transform="translate(511.59 215.7) scale(0.920 0.920)" shape-rendering="geometricPrecision"><path d="M0.3 2.5 H4.5 M2 0.2 V6.5 Q4.5 4 6.8 4.8 Q8.4 6.2 6.4 8.6 Q4.6 10.4 3.4 11.8" fill="none" stroke="#207878" stroke-width="1.36"/></g>
<g transform="translate(510.9 232.89) scale(0.920 0.920)" shape-rendering="geometricPrecision"><path d="M1.4 0.5 Q2.6 3 1.4 5.5 M8.6 0.5 Q7.4 3 8.6 5.5 M1.8 3 H8.2 M5 0.3 V6.4" fill="none" stroke="#c030e0" stroke-width="1.36"/><circle cx="5" cy="8.2" r="1.7" fill="none" stroke="#c030e0" stroke-width="1.36"/></g>
<g transform="translate(510.9 249.16) scale(0.920 0.920)" shape-rendering="geometricPrecision"><path d="M1.2 0.8 Q1.2 5.4 5 5.4 Q8.8 5.4 8.8 0.8 M5 0.2 V10.6 M2.4 8.2 H7.6" fill="none" stroke="#1030e0" stroke-width="1.36"/></g>
<g transform="translate(510.9 265.43) scale(0.920 0.920)" shape-rendering="geometricPrecision"><path d="M1.4 1.2 Q1.2 5.6 5 5.6 Q8.8 5.6 8.6 1.2 M5 5.6 V10.6 M2.4 8.6 H7.6" fill="none" stroke="#a01010" stroke-width="1.36"/><circle cx="5" cy="2.4" r="1.6" fill="none" stroke="#a01010" stroke-width="1.36"/></g>
<text x="548" y="127.8" font-size="12.5" fill="#b040b0" textLength="10.5" lengthAdjust="spacingAndGlyphs" xml:space="preserve">02</text>
<g transform="translate(563.5 119.8) scale(1.000 0.850)" shape-rendering="geometricPrecision"><path d="M0.6 3.6 L3 1.2 L5.2 3.6 L7.4 1.2 L9.6 3.6 M0.6 8.4 L3 6 L5.2 8.4 L7.4 6 L9.6 8.4" fill="none" stroke="#b040b0" stroke-width="1.30"/></g>
<text x="579.5" y="127.8" font-size="12.5" fill="#b040b0" textLength="10.8" lengthAdjust="spacingAndGlyphs" xml:space="preserve">16</text>
<text x="548" y="144.07" font-size="12.5" fill="#707030" textLength="10.5" lengthAdjust="spacingAndGlyphs" xml:space="preserve">05</text>
<g transform="translate(563.5 136.07) scale(1.000 0.850)" shape-rendering="geometricPrecision"><path d="M0.6 2.6 Q2.4 0.4 3.8 2.6 M9.4 0.6 Q6.6 2 4.6 2.6 Q3 4.6 3 6.6" fill="none" stroke="#707030" stroke-width="1.30"/><circle cx="5.2" cy="7.4" r="2.4" fill="none" stroke="#707030" stroke-width="1.30"/></g>
<text x="579.5" y="144.07" font-size="12.5" fill="#707030" textLength="10.8" lengthAdjust="spacingAndGlyphs" xml:space="preserve">48</text>
<text x="602" y="144.07" font-size="12.5" fill="#000" textLength="26.8" lengthAdjust="spacingAndGlyphs" xml:space="preserve">04  58</text>
<text x="548" y="160.34" font-size="12.5" fill="#f060f0" textLength="10.5" lengthAdjust="spacingAndGlyphs" xml:space="preserve">04</text>
<g transform="translate(563.5 152.34) scale(1.000 0.850)" shape-rendering="geometricPrecision"><path d="M0.8 9.2 H9.2 M0.8 6.8 H3.2 Q1.4 1.6 5 1.6 Q8.6 1.6 6.8 6.8 H9.2" fill="none" stroke="#f060f0" stroke-width="1.30"/></g>
<text x="579.5" y="160.34" font-size="12.5" fill="#f060f0" textLength="10.8" lengthAdjust="spacingAndGlyphs" xml:space="preserve">18</text>
<text x="602" y="160.34" font-size="12.5" fill="#000" textLength="26.8" lengthAdjust="spacingAndGlyphs" xml:space="preserve">02  39</text>
<text x="548" y="176.61" font-size="12.5" fill="#b040b0" textLength="10.5" lengthAdjust="spacingAndGlyphs" xml:space="preserve">19</text>
<g transform="translate(563.5 168.61) scale(1.000 0.850)" shape-rendering="geometricPrecision"><path d="M0.6 3.6 L3 1.2 L5.2 3.6 L7.4 1.2 L9.6 3.6 M0.6 8.4 L3 6 L5.2 8.4 L7.4 6 L9.6 8.4" fill="none" stroke="#b040b0" stroke-width="1.30"/></g>
<text x="579.5" y="176.61" font-size="12.5" fill="#b040b0" textLength="10.8" lengthAdjust="spacingAndGlyphs" xml:space="preserve">07</text>
<text x="548" y="192.88" font-size="12.5" fill="#4040ff" textLength="10.5" lengthAdjust="spacingAndGlyphs" xml:space="preserve">00</text>
<g transform="translate(563.5 184.88) scale(1.000 0.850)" shape-rendering="geometricPrecision"><path d="M1.2 0.6 Q7.4 5 1.6 9.6 M8.8 0.6 Q2.6 5 8.4 9.6 M1.6 5 H9.4" fill="none" stroke="#4040ff" stroke-width="1.30"/></g>
<text x="579.5" y="192.88" font-size="12.5" fill="#4040ff" textLength="10.8" lengthAdjust="spacingAndGlyphs" xml:space="preserve">53</text>
<text x="596.7" y="192.88" font-size="12.5" fill="#000" textLength="32.1" lengthAdjust="spacingAndGlyphs" xml:space="preserve">-01  06</text>
<text x="548" y="209.15" font-size="12.5" fill="#4040ff" textLength="10.5" lengthAdjust="spacingAndGlyphs" xml:space="preserve">16</text>
<g transform="translate(563.5 201.15) scale(1.000 0.850)" shape-rendering="geometricPrecision"><path d="M1.2 0.6 Q7.4 5 1.6 9.6 M8.8 0.6 Q2.6 5 8.4 9.6 M1.6 5 H9.4" fill="none" stroke="#4040ff" stroke-width="1.30"/></g>
<text x="579.5" y="209.15" font-size="12.5" fill="#4040ff" textLength="10.8" lengthAdjust="spacingAndGlyphs" xml:space="preserve">16</text>
<text x="602" y="209.15" font-size="12.5" fill="#000" textLength="26.8" lengthAdjust="spacingAndGlyphs" xml:space="preserve">00  13</text>
<text x="548" y="225.42" font-size="12.5" fill="#4040ff" textLength="10.5" lengthAdjust="spacingAndGlyphs" xml:space="preserve">11</text>
<g transform="translate(563.5 217.42) scale(1.000 0.850)" shape-rendering="geometricPrecision"><path d="M0.6 1.2 V9 M0.6 2.6 Q2 0.4 3.2 2.6 V9 M3.2 2.6 Q4.6 0.4 5.8 2.6 V8 Q6 9.2 8 8.8 M7.2 7 L9.2 8.6 L7.8 10.2" fill="none" stroke="#4040ff" stroke-width="1.30"/></g>
<text x="579.5" y="225.42" font-size="12.5" fill="#4040ff" textLength="10.8" lengthAdjust="spacingAndGlyphs" xml:space="preserve">57</text>
<text x="602" y="225.42" font-size="12.5" fill="#000" textLength="26.8" lengthAdjust="spacingAndGlyphs" xml:space="preserve">02  00</text>
</g>
<rect x="632" y="100" width="17" height="175" fill="#f0f0f0"/>
<rect x="633" y="115" width="13" height="15" fill="#cdcdcd"/>
<path d="M636.4000000000001 109.5 L639.7 106.5 L643.0 109.5" fill="none" stroke="#606060" stroke-width="2" shape-rendering="geometricPrecision"/>
<path d="M636.4000000000001 265.5 L639.7 268.5 L643.0 265.5" fill="none" stroke="#606060" stroke-width="2" shape-rendering="geometricPrecision"/>
<rect x="647" y="100" width="1" height="175" fill="#f0f0f0"/>
<rect x="649" y="98" width="1" height="177" fill="#a0a0a0"/>
<rect x="650" y="98" width="270" height="177" fill="#ffffff"/>
<rect x="650" y="98" width="270" height="1" fill="#a0a0a0"/>
<rect x="650" y="99" width="270" height="1" fill="#696969"/>
<rect x="650" y="98" width="1" height="177" fill="#696969"/>
<text x="654.8" y="111.6" font-size="11.5" fill="#000" textLength="176" lengthAdjust="spacingAndGlyphs" xml:space="preserve">Rahu 15°45' Libra in 9 house, Swati</text>
<rect x="905" y="100" width="14" height="175" fill="#f0f0f0"/>
<path d="M907.2 109.5 L910.5 106.5 L913.8 109.5" fill="none" stroke="#c0c0c0" stroke-width="2" shape-rendering="geometricPrecision"/>
<path d="M907.2 265.5 L910.5 268.5 L913.8 265.5" fill="none" stroke="#c0c0c0" stroke-width="2" shape-rendering="geometricPrecision"/>
<rect x="504" y="275" width="416" height="10" fill="#f0f0f0"/>
<rect x="504" y="276" width="416" height="1" fill="#b8b8b8"/>
<rect x="504" y="277" width="416" height="1" fill="#d0d0d0"/>
<rect x="504" y="278" width="416" height="1" fill="#ffffff"/>
<rect x="504" y="283" width="416" height="1" fill="#a8a8a8"/>
<rect x="504" y="284" width="416" height="1" fill="#ffffff"/>
<rect x="503" y="285" width="417" height="304" fill="#ffffff"/>
<rect x="503" y="285" width="417" height="1" fill="#808080"/>
<rect x="504" y="286" width="415" height="1" fill="#c0c0c0"/>
<rect x="503" y="285" width="1" height="304" fill="#808080"/>
<rect x="919" y="285" width="1" height="304" fill="#808080"/>
<defs><clipPath id="scp"><rect x="504" y="286" width="401" height="288"/></clipPath></defs>
<g clip-path="url(#scp)">
<rect x="546" y="287" width="2" height="1" fill="#000"/>
<text x="516.3" y="315.7" font-size="14" fill="#000" font-weight="bold" textLength="148" lengthAdjust="spacingAndGlyphs" xml:space="preserve">Chart summary (Rasi)</text>
<rect x="517" y="322.4" width="84" height="14.4" fill="#ffffff"/>
<rect x="601" y="322.4" width="335" height="14.4" fill="#f0ffff"/>
<text x="641.6" y="333.7" font-size="12" fill="#000" font-weight="bold" text-anchor="middle" textLength="19.9" lengthAdjust="spacingAndGlyphs" xml:space="preserve">Sun</text>
<text x="725.2" y="333.7" font-size="12" fill="#000" font-weight="bold" text-anchor="middle" textLength="28.1" lengthAdjust="spacingAndGlyphs" xml:space="preserve">Moon</text>
<text x="809.2" y="333.7" font-size="12" fill="#000" font-weight="bold" text-anchor="middle" textLength="24.7" lengthAdjust="spacingAndGlyphs" xml:space="preserve">Mars</text>
<text x="893.1" y="333.7" font-size="12" fill="#000" font-weight="bold" text-anchor="middle" textLength="41.1" lengthAdjust="spacingAndGlyphs" xml:space="preserve">Mercury</text>
<rect x="517" y="336.8" width="84" height="14.4" fill="#fffde0"/>
<rect x="601" y="336.8" width="335" height="14.4" fill="#ffffff"/>
<text x="557.4" y="348.1" font-size="12" fill="#000" font-weight="bold" text-anchor="middle" textLength="50.7" lengthAdjust="spacingAndGlyphs" xml:space="preserve">Longitude</text>
<text x="641.6" y="348.1" font-size="12" fill="#000" text-anchor="middle" textLength="63.2" lengthAdjust="spacingAndGlyphs" xml:space="preserve">02°15'45" Aq</text>
<text x="725.2" y="348.1" font-size="12" fill="#000" text-anchor="middle" textLength="64.5" lengthAdjust="spacingAndGlyphs" xml:space="preserve">05°47'49" Cp</text>
<text x="809.2" y="348.1" font-size="12" fill="#000" text-anchor="middle" textLength="58.9" lengthAdjust="spacingAndGlyphs" xml:space="preserve">04°18'07" Li</text>
<text x="893.1" y="348.1" font-size="12" fill="#000" text-anchor="middle" textLength="63.2" lengthAdjust="spacingAndGlyphs" xml:space="preserve">19°06'34" Aq</text>
<rect x="517" y="351.2" width="84" height="14.4" fill="#fffde0"/>
<rect x="601" y="351.2" width="335" height="14.4" fill="#ffffff"/>
<text x="557.4" y="362.5" font-size="12" fill="#000" font-weight="bold" text-anchor="middle" textLength="40.8" lengthAdjust="spacingAndGlyphs" xml:space="preserve">Latitude</text>
<text x="641.6" y="362.5" font-size="12" fill="#000" text-anchor="middle" textLength="7.4" lengthAdjust="spacingAndGlyphs" xml:space="preserve">--</text>
<text x="725.2" y="362.5" font-size="12" fill="#000" text-anchor="middle" textLength="47.3" lengthAdjust="spacingAndGlyphs" xml:space="preserve">04°57'56"</text>
<text x="809.2" y="362.5" font-size="12" fill="#000" text-anchor="middle" textLength="47.3" lengthAdjust="spacingAndGlyphs" xml:space="preserve">02°38'36"</text>
<text x="893.1" y="362.5" font-size="12" fill="#000" text-anchor="middle" textLength="51.0" lengthAdjust="spacingAndGlyphs" xml:space="preserve">-00°00'05"</text>
<rect x="517" y="365.6" width="84" height="14.4" fill="#fffde0"/>
<rect x="601" y="365.6" width="335" height="14.4" fill="#ffffff"/>
<text x="557.4" y="376.9" font-size="12" fill="#000" font-weight="bold" text-anchor="middle" textLength="50.8" lengthAdjust="spacingAndGlyphs" xml:space="preserve">Nakshatra</text>
<text x="641.6" y="376.9" font-size="12" fill="#000" text-anchor="middle" textLength="49.7" lengthAdjust="spacingAndGlyphs" xml:space="preserve">Dhanishta</text>
<text x="725.2" y="376.9" font-size="12" fill="#000" text-anchor="middle" textLength="49.1" lengthAdjust="spacingAndGlyphs" xml:space="preserve">U.Shadha</text>
<text x="809.2" y="376.9" font-size="12" fill="#000" text-anchor="middle" textLength="29.4" lengthAdjust="spacingAndGlyphs" xml:space="preserve">Chitra</text>
<text x="893.1" y="376.9" font-size="12" fill="#000" text-anchor="middle" textLength="55.2" lengthAdjust="spacingAndGlyphs" xml:space="preserve">Satabhisha</text>
<rect x="517" y="380.0" width="84" height="14.4" fill="#fffde0"/>
<rect x="601" y="380.0" width="335" height="14.4" fill="#ffffff"/>
<text x="557.4" y="391.3" font-size="12" fill="#000" text-anchor="middle" textLength="73.8" lengthAdjust="spacingAndGlyphs" xml:space="preserve">Nakshatra (28)</text>
<text x="641.6" y="391.3" font-size="12" fill="#000" text-anchor="middle" textLength="49.7" lengthAdjust="spacingAndGlyphs" xml:space="preserve">Dhanishta</text>
<text x="725.2" y="391.3" font-size="12" fill="#000" text-anchor="middle" textLength="49.1" lengthAdjust="spacingAndGlyphs" xml:space="preserve">U.Shadha</text>
<text x="809.2" y="391.3" font-size="12" fill="#000" text-anchor="middle" textLength="29.4" lengthAdjust="spacingAndGlyphs" xml:space="preserve">Chitra</text>
<text x="893.1" y="391.3" font-size="12" fill="#000" text-anchor="middle" textLength="55.2" lengthAdjust="spacingAndGlyphs" xml:space="preserve">Satabhisha</text>
<rect x="517" y="394.4" width="84" height="14.4" fill="#fffde0"/>
<rect x="601" y="394.4" width="335" height="14.4" fill="#ffffff"/>
<text x="557.4" y="405.7" font-size="12" fill="#000" font-weight="bold" text-anchor="middle" textLength="73.5" lengthAdjust="spacingAndGlyphs" xml:space="preserve">Nakshatra lord</text>
<text x="641.6" y="405.7" font-size="12" fill="#000" text-anchor="middle" textLength="24.5" lengthAdjust="spacingAndGlyphs" xml:space="preserve">Mars</text>
<text x="725.2" y="405.7" font-size="12" fill="#000" text-anchor="middle" textLength="19.6" lengthAdjust="spacingAndGlyphs" xml:space="preserve">Sun</text>
<text x="809.2" y="405.7" font-size="12" fill="#000" text-anchor="middle" textLength="24.5" lengthAdjust="spacingAndGlyphs" xml:space="preserve">Mars</text>
<text x="893.1" y="405.7" font-size="12" fill="#000" text-anchor="middle" textLength="26.4" lengthAdjust="spacingAndGlyphs" xml:space="preserve">Rahu</text>
<rect x="517" y="408.8" width="84" height="14.4" fill="#fffde0"/>
<rect x="601" y="408.8" width="335" height="14.4" fill="#ffffff"/>
<text x="557.4" y="420.1" font-size="12" fill="#000" font-weight="bold" text-anchor="middle" textLength="25.1" lengthAdjust="spacingAndGlyphs" xml:space="preserve">Pada</text>
<text x="641.6" y="420.1" font-size="12" fill="#000" text-anchor="middle" textLength="6.1" lengthAdjust="spacingAndGlyphs" xml:space="preserve">3</text>
<text x="725.2" y="420.1" font-size="12" fill="#000" text-anchor="middle" textLength="6.1" lengthAdjust="spacingAndGlyphs" xml:space="preserve">3</text>
<text x="809.2" y="420.1" font-size="12" fill="#000" text-anchor="middle" textLength="6.1" lengthAdjust="spacingAndGlyphs" xml:space="preserve">4</text>
<text x="893.1" y="420.1" font-size="12" fill="#000" text-anchor="middle" textLength="6.1" lengthAdjust="spacingAndGlyphs" xml:space="preserve">4</text>
<rect x="517" y="423.2" width="84" height="14.4" fill="#fffde0"/>
<rect x="601" y="423.2" width="335" height="14.4" fill="#ffffff"/>
<text x="557.4" y="434.5" font-size="12" fill="#000" font-weight="bold" text-anchor="middle" textLength="66.0" lengthAdjust="spacingAndGlyphs" xml:space="preserve">Chara karaka</text>
<text x="641.6" y="434.5" font-size="12" fill="#000" text-anchor="middle" textLength="26.4" lengthAdjust="spacingAndGlyphs" xml:space="preserve">Gnati</text>
<text x="725.2" y="434.5" font-size="12" fill="#000" text-anchor="middle" textLength="19.0" lengthAdjust="spacingAndGlyphs" xml:space="preserve">Pitri</text>
<text x="809.2" y="434.5" font-size="12" fill="#000" text-anchor="middle" textLength="26.4" lengthAdjust="spacingAndGlyphs" xml:space="preserve">Putra</text>
<text x="893.1" y="434.5" font-size="12" fill="#000" text-anchor="middle" textLength="25.8" lengthAdjust="spacingAndGlyphs" xml:space="preserve">Atma</text>
<rect x="517" y="437.6" width="84" height="14.4" fill="#fffde0"/>
<rect x="601" y="437.6" width="335" height="14.4" fill="#ffffff"/>
<text x="557.4" y="448.9" font-size="12" fill="#000" font-weight="bold" text-anchor="middle" textLength="69.6" lengthAdjust="spacingAndGlyphs" xml:space="preserve">Graha Arudha</text>
<text x="641.6" y="448.9" font-size="12" fill="#000" text-anchor="middle" textLength="33.1" lengthAdjust="spacingAndGlyphs" xml:space="preserve">Taurus</text>
<text x="725.2" y="448.9" font-size="12" fill="#000" text-anchor="middle" textLength="25.2" lengthAdjust="spacingAndGlyphs" xml:space="preserve">Aries</text>
<text x="809.2" y="448.9" font-size="12" fill="#000" text-anchor="middle" textLength="52.2" lengthAdjust="spacingAndGlyphs" xml:space="preserve">Sagittarius</text>
<text x="893.1" y="448.9" font-size="12" fill="#000" text-anchor="middle" textLength="24.5" lengthAdjust="spacingAndGlyphs" xml:space="preserve">Libra</text>
<rect x="517" y="452.0" width="84" height="14.4" fill="#ffffff"/>
<rect x="601" y="452.0" width="335" height="14.4" fill="#ffffff"/>
<rect x="517" y="466.4" width="84" height="14.4" fill="#e2ffe2"/>
<rect x="601" y="466.4" width="335" height="14.4" fill="#ffffff"/>
<text x="557.4" y="477.7" font-size="12" fill="#000" font-weight="bold" text-anchor="middle" textLength="40.5" lengthAdjust="spacingAndGlyphs" xml:space="preserve">Avastha</text>
<text x="641.6" y="477.7" font-size="12" fill="#000" text-anchor="middle" textLength="25.2" lengthAdjust="spacingAndGlyphs" xml:space="preserve">Child</text>
<text x="725.2" y="477.7" font-size="12" fill="#000" text-anchor="middle" textLength="49.7" lengthAdjust="spacingAndGlyphs" xml:space="preserve">Deceased</text>
<text x="809.2" y="477.7" font-size="12" fill="#000" text-anchor="middle" textLength="25.2" lengthAdjust="spacingAndGlyphs" xml:space="preserve">Child</text>
<text x="893.1" y="477.7" font-size="12" fill="#000" text-anchor="middle" textLength="33.7" lengthAdjust="spacingAndGlyphs" xml:space="preserve">Elderly</text>
<rect x="517" y="480.8" width="84" height="14.4" fill="#e2ffe2"/>
<rect x="601" y="480.8" width="335" height="14.4" fill="#ffffff"/>
<text x="557.4" y="492.1" font-size="12" fill="#000" font-weight="bold" text-anchor="middle" textLength="25.7" lengthAdjust="spacingAndGlyphs" xml:space="preserve">Deity</text>
<text x="641.6" y="492.1" font-size="12" fill="#000" text-anchor="middle" textLength="22.1" lengthAdjust="spacingAndGlyphs" xml:space="preserve">Agni</text>
<text x="725.2" y="492.1" font-size="12" fill="#000" text-anchor="middle" textLength="34.8" lengthAdjust="spacingAndGlyphs" xml:space="preserve">Varuna</text>
<text x="809.2" y="492.1" font-size="12" fill="#000" text-anchor="middle" textLength="68.7" lengthAdjust="spacingAndGlyphs" xml:space="preserve">Subrahmanya</text>
<text x="893.1" y="492.1" font-size="12" fill="#000" text-anchor="middle" textLength="64.2" lengthAdjust="spacingAndGlyphs" xml:space="preserve">Maha Vishnu</text>
<rect x="517" y="495.2" width="84" height="14.4" fill="#e2ffe2"/>
<rect x="601" y="495.2" width="335" height="14.4" fill="#ffffff"/>
<text x="557.4" y="506.5" font-size="12" fill="#000" font-weight="bold" text-anchor="middle" textLength="36.8" lengthAdjust="spacingAndGlyphs" xml:space="preserve">Gender</text>
<text x="641.6" y="506.5" font-size="12" fill="#000" text-anchor="middle" textLength="23.9" lengthAdjust="spacingAndGlyphs" xml:space="preserve">male</text>
<text x="725.2" y="506.5" font-size="12" fill="#000" text-anchor="middle" textLength="33.1" lengthAdjust="spacingAndGlyphs" xml:space="preserve">female</text>
<text x="809.2" y="506.5" font-size="12" fill="#000" text-anchor="middle" textLength="23.9" lengthAdjust="spacingAndGlyphs" xml:space="preserve">male</text>
<text x="893.1" y="506.5" font-size="12" fill="#000" text-anchor="middle" textLength="36.2" lengthAdjust="spacingAndGlyphs" xml:space="preserve">eunuch</text>
<rect x="517" y="509.6" width="84" height="14.4" fill="#e2ffe2"/>
<rect x="601" y="509.6" width="335" height="14.4" fill="#ffffff"/>
<text x="557.4" y="520.9" font-size="12" fill="#000" font-weight="bold" text-anchor="middle" textLength="27.4" lengthAdjust="spacingAndGlyphs" xml:space="preserve">Color</text>
<text x="641.6" y="520.9" font-size="12" fill="#000" text-anchor="middle" textLength="46.6" lengthAdjust="spacingAndGlyphs" xml:space="preserve">blood-red</text>
<text x="725.2" y="520.9" font-size="12" fill="#000" text-anchor="middle" textLength="28.8" lengthAdjust="spacingAndGlyphs" xml:space="preserve">tawny</text>
<text x="809.2" y="520.9" font-size="12" fill="#000" text-anchor="middle" textLength="46.6" lengthAdjust="spacingAndGlyphs" xml:space="preserve">blood-red</text>
<text x="893.1" y="520.9" font-size="12" fill="#000" text-anchor="middle" textLength="58.3" lengthAdjust="spacingAndGlyphs" xml:space="preserve">grass green</text>
<rect x="517" y="524.0" width="84" height="14.4" fill="#e2ffe2"/>
<rect x="601" y="524.0" width="335" height="14.4" fill="#ffffff"/>
<text x="557.4" y="535.3" font-size="12" fill="#000" font-weight="bold" text-anchor="middle" textLength="60.7" lengthAdjust="spacingAndGlyphs" xml:space="preserve">Governance</text>
<text x="641.6" y="535.3" font-size="12" fill="#000" text-anchor="middle" textLength="20.3" lengthAdjust="spacingAndGlyphs" xml:space="preserve">soul</text>
<text x="725.2" y="535.3" font-size="12" fill="#000" text-anchor="middle" textLength="23.9" lengthAdjust="spacingAndGlyphs" xml:space="preserve">mind</text>
<text x="809.2" y="535.3" font-size="12" fill="#000" text-anchor="middle" textLength="39.9" lengthAdjust="spacingAndGlyphs" xml:space="preserve">strength</text>
<text x="893.1" y="535.3" font-size="12" fill="#000" text-anchor="middle" textLength="35.6" lengthAdjust="spacingAndGlyphs" xml:space="preserve">speech</text>
<rect x="517" y="538.4" width="84" height="14.4" fill="#e2ffe2"/>
<rect x="601" y="538.4" width="335" height="14.4" fill="#ffffff"/>
<text x="557.4" y="549.7" font-size="12" fill="#000" font-weight="bold" text-anchor="middle" textLength="38.5" lengthAdjust="spacingAndGlyphs" xml:space="preserve">Cabinet</text>
<text x="641.6" y="549.7" font-size="12" fill="#000" text-anchor="middle" textLength="20.3" lengthAdjust="spacingAndGlyphs" xml:space="preserve">king</text>
<text x="725.2" y="549.7" font-size="12" fill="#000" text-anchor="middle" textLength="20.3" lengthAdjust="spacingAndGlyphs" xml:space="preserve">king</text>
<text x="809.2" y="549.7" font-size="12" fill="#000" text-anchor="middle" textLength="30.7" lengthAdjust="spacingAndGlyphs" xml:space="preserve">leader</text>
<text x="893.1" y="549.7" font-size="12" fill="#000" text-anchor="middle" textLength="30.1" lengthAdjust="spacingAndGlyphs" xml:space="preserve">prince</text>
<rect x="517" y="552.8" width="84" height="14.4" fill="#e2ffe2"/>
<rect x="601" y="552.8" width="335" height="14.4" fill="#ffffff"/>
<text x="557.4" y="564.1" font-size="12" fill="#000" font-weight="bold" text-anchor="middle" textLength="28.6" lengthAdjust="spacingAndGlyphs" xml:space="preserve">Varna</text>
<text x="641.6" y="564.1" font-size="12" fill="#000" text-anchor="middle" textLength="46.0" lengthAdjust="spacingAndGlyphs" xml:space="preserve">Kshatriya</text>
<text x="725.2" y="564.1" font-size="12" fill="#000" text-anchor="middle" textLength="35.4" lengthAdjust="spacingAndGlyphs" xml:space="preserve">Vaysya</text>
<text x="809.2" y="564.1" font-size="12" fill="#000" text-anchor="middle" textLength="46.0" lengthAdjust="spacingAndGlyphs" xml:space="preserve">Kshatriya</text>
<text x="893.1" y="564.1" font-size="12" fill="#000" text-anchor="middle" textLength="35.4" lengthAdjust="spacingAndGlyphs" xml:space="preserve">Vaysya</text>
<rect x="517" y="567.2" width="84" height="14.4" fill="#e2ffe2"/>
<rect x="601" y="567.2" width="335" height="14.4" fill="#ffffff"/>
<text x="557.4" y="578.5" font-size="12" fill="#000" font-weight="bold" text-anchor="middle" textLength="26.8" lengthAdjust="spacingAndGlyphs" xml:space="preserve">Guna</text>
<text x="641.6" y="578.5" font-size="12" fill="#000" text-anchor="middle" textLength="31.3" lengthAdjust="spacingAndGlyphs" xml:space="preserve">sattvik</text>
<text x="725.2" y="578.5" font-size="12" fill="#000" text-anchor="middle" textLength="31.3" lengthAdjust="spacingAndGlyphs" xml:space="preserve">sattvik</text>
<text x="809.2" y="578.5" font-size="12" fill="#000" text-anchor="middle" textLength="38.0" lengthAdjust="spacingAndGlyphs" xml:space="preserve">tamasik</text>
<text x="893.1" y="578.5" font-size="12" fill="#000" text-anchor="middle" textLength="31.9" lengthAdjust="spacingAndGlyphs" xml:space="preserve">rajasik</text>
<rect x="517" y="321.9" width="419" height="1" fill="#d0d0d0" shape-rendering="geometricPrecision"/>
<rect x="517" y="336.3" width="419" height="1" fill="#d0d0d0" shape-rendering="geometricPrecision"/>
<rect x="517" y="350.7" width="419" height="1" fill="#d0d0d0" shape-rendering="geometricPrecision"/>
<rect x="517" y="365.1" width="419" height="1" fill="#d0d0d0" shape-rendering="geometricPrecision"/>
<rect x="517" y="379.5" width="419" height="1" fill="#d0d0d0" shape-rendering="geometricPrecision"/>
<rect x="517" y="393.9" width="419" height="1" fill="#d0d0d0" shape-rendering="geometricPrecision"/>
<rect x="517" y="408.3" width="419" height="1" fill="#d0d0d0" shape-rendering="geometricPrecision"/>
<rect x="517" y="422.7" width="419" height="1" fill="#d0d0d0" shape-rendering="geometricPrecision"/>
<rect x="517" y="437.1" width="419" height="1" fill="#d0d0d0" shape-rendering="geometricPrecision"/>
<rect x="517" y="451.5" width="419" height="1" fill="#d0d0d0" shape-rendering="geometricPrecision"/>
<rect x="517" y="465.9" width="419" height="1" fill="#d0d0d0" shape-rendering="geometricPrecision"/>
<rect x="517" y="480.3" width="419" height="1" fill="#d0d0d0" shape-rendering="geometricPrecision"/>
<rect x="517" y="494.7" width="419" height="1" fill="#d0d0d0" shape-rendering="geometricPrecision"/>
<rect x="517" y="509.1" width="419" height="1" fill="#d0d0d0" shape-rendering="geometricPrecision"/>
<rect x="517" y="523.5" width="419" height="1" fill="#d0d0d0" shape-rendering="geometricPrecision"/>
<rect x="517" y="537.9" width="419" height="1" fill="#d0d0d0" shape-rendering="geometricPrecision"/>
<rect x="517" y="552.3" width="419" height="1" fill="#d0d0d0" shape-rendering="geometricPrecision"/>
<rect x="517" y="566.7" width="419" height="1" fill="#d0d0d0" shape-rendering="geometricPrecision"/>
<rect x="517" y="581.1" width="419" height="1" fill="#d0d0d0" shape-rendering="geometricPrecision"/>
<rect x="516.5" y="322" width="1" height="259.2" fill="#d0d0d0" shape-rendering="geometricPrecision"/>
<rect x="600.5" y="322" width="1" height="259.2" fill="#d0d0d0" shape-rendering="geometricPrecision"/>
<rect x="683.7" y="322" width="1" height="259.2" fill="#d0d0d0" shape-rendering="geometricPrecision"/>
<rect x="767.7" y="322" width="1" height="259.2" fill="#d0d0d0" shape-rendering="geometricPrecision"/>
<rect x="851.7" y="322" width="1" height="259.2" fill="#d0d0d0" shape-rendering="geometricPrecision"/>
<rect x="935.5" y="322" width="1" height="259.2" fill="#d0d0d0" shape-rendering="geometricPrecision"/>
</g>
<rect x="905" y="286" width="14" height="288" fill="#f0f0f0"/>
<rect x="905" y="321" width="13" height="39" fill="#cdcdcd"/>
<path d="M908.0 296.5 L911.3 293.5 L914.5999999999999 296.5" fill="none" stroke="#606060" stroke-width="2" shape-rendering="geometricPrecision"/>
<path d="M908.0 564.5 L911.3 567.5 L914.5999999999999 564.5" fill="none" stroke="#606060" stroke-width="2" shape-rendering="geometricPrecision"/>
<rect x="504" y="574" width="401" height="15" fill="#f0f0f0"/>
<rect x="538" y="575" width="197" height="13" fill="#cdcdcd"/>
<path d="M512.8 578.0 L509.8 581.3 L512.8 584.5999999999999" fill="none" stroke="#606060" stroke-width="2" shape-rendering="geometricPrecision"/>
<path d="M896.2 578.0 L899.2 581.3 L896.2 584.5999999999999" fill="none" stroke="#606060" stroke-width="2" shape-rendering="geometricPrecision"/>
<rect x="905" y="574" width="14" height="15" fill="#f0f0f0"/>
<rect x="37" y="589" width="883" height="18" fill="#f0f0f0"/>
<rect x="37" y="589" width="883" height="1" fill="#ffffff"/>
<rect x="37" y="590" width="883" height="1" fill="#c0c0c0"/>
<rect x="37" y="591" width="883" height="1" fill="#a0a0a0"/>
<rect x="503" y="589" width="417" height="1" fill="#808080"/>
<rect x="37" y="606" width="883" height="1" fill="#ffffff"/>
<path d="M918.5 596.5 L909 606 M918.5 600.5 L913 606 M918.5 604 L916.5 606" stroke="#a0a0a0" stroke-width="1.3" shape-rendering="geometricPrecision"/>
</svg></body></html>
